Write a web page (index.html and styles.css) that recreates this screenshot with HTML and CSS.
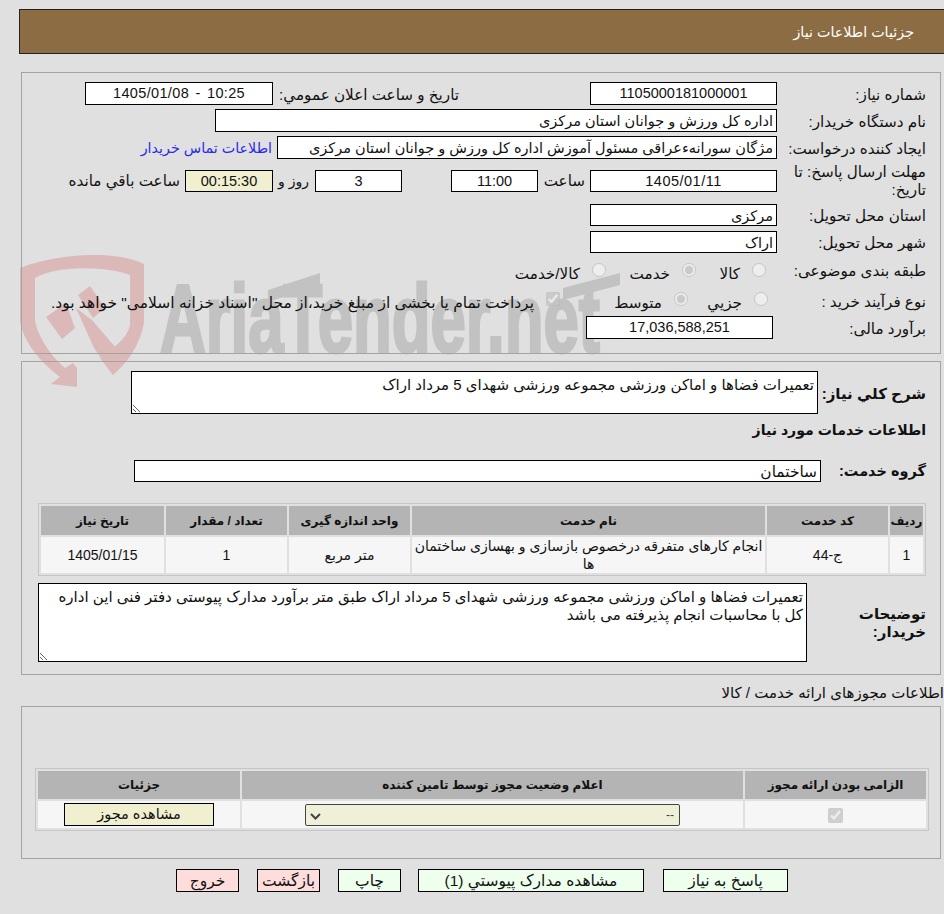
FILE: index.html
```html
<!DOCTYPE html>
<html lang="fa" dir="rtl">
<head>
<meta charset="utf-8">
<title>جزئیات اطلاعات نیاز</title>
<link rel="stylesheet" href="styles.css">
</head>
<body>
<svg class="watermark" width="620" height="160" viewBox="0 0 620 160" aria-hidden="true">
  <path class="wm-red" d="M10 28 C40 16 100 8 134 24 L134 83 C130 105 118 122 103 135 L90 118 C108 105 120 95 120 82 L120 35 C100 27 50 24 25 38 L25 80 C27 95 40 115 55 128 L63 123 L67 128 L67 147 L41 144 L50 137 C30 122 12 100 10 80 Z"/>
  <path class="wm-red" d="M36 77 L56 63 L65 88 L52 99 Z M68 55 L80 46 L95 68 L83 78 Z M66 68 L82 80 L112 115 L103 135 L84 108 Z"/>
  <text class="wm-text" x="150" y="112" textLength="440" lengthAdjust="spacingAndGlyphs">AriaTender.net</text>
  <path class="wm-gray" d="M258 50 L310 33 L310 45 L258 62 Z M553 48 L610 33 L610 45 L553 60 Z"/>
</svg>

<header class="page-head">جزئیات اطلاعات نیاز</header>

<section class="panel p1">
  <div class="row mb4">
    <span class="lbl">شماره نیاز:</span>
    <span class="box w187 c">1105000181000001</span>
    <span class="lbl-free mr-pub">تاریخ و ساعت اعلان عمومي:</span>
    <span class="box w188 c ltr pubdate">1405/01/08 - 10:25</span>
  </div>
  <div class="row mb4">
    <span class="lbl">نام دستگاه خریدار:</span>
    <span class="box w562">اداره کل ورزش و جوانان استان مرکزی</span>
  </div>
  <div class="row mb4">
    <span class="lbl">ایجاد کننده درخواست:</span>
    <span class="box w500">مژگان سورانهءعراقی مسئول آموزش اداره کل ورزش و جوانان استان مرکزی</span>
    <a class="link" href="#">اطلاعات تماس خریدار</a>
  </div>
  <div class="row deadline">
    <span class="lbl two">مهلت ارسال پاسخ: تا تاریخ:</span>
    <span class="box w187 h22 c ltr date">1405/01/11</span>
    <span class="lbl-free sa">ساعت</span>
    <span class="box w87 h22 c">11:00</span>
    <span class="box w87 h22 c day">3</span>
    <span class="lbl-free rz">روز و</span>
    <span class="box w88 h22 c timer">00:15:30</span>
    <span class="lbl-free rem">ساعت باقي مانده</span>
  </div>
  <div class="row mb5">
    <span class="lbl">استان محل تحویل:</span>
    <span class="box w187 h22">مرکزی</span>
  </div>
  <div class="row mb4">
    <span class="lbl">شهر محل تحویل:</span>
    <span class="box w187 h22">اراک</span>
  </div>
  <div class="row choices r-cat">
    <span class="lbl">طبقه بندی موضوعی:</span>
    <input class="rd m11" type="radio" disabled><span class="opt w44">کالا</span>
    <input class="rd" type="radio" disabled checked><span class="opt w64">خدمت</span>
    <input class="rd" type="radio" disabled><span class="opt">کالا/خدمت</span>
  </div>
  <div class="row choices r-proc">
    <span class="lbl">نوع فرآیند خرید :</span>
    <input class="rd m9" type="radio" disabled><span class="opt w54">جزیي</span>
    <input class="rd" type="radio" disabled checked><span class="opt w102">متوسط</span>
    <input class="rd" type="checkbox" disabled checked><span class="opt long">پرداخت تمام یا بخشی از مبلغ خرید،از محل "اسناد خزانه اسلامی" خواهد بود.</span>
  </div>
  <div class="row">
    <span class="lbl">برآورد مالی:</span>
    <span class="box w187 c budget">17,036,588,251</span>
  </div>
</section>

<section class="panel p2">
  <div class="row desc-row">
    <span class="lbl-b lb-desc">شرح كلي نیاز:</span>
    <textarea class="ta ta1" readonly>تعمیرات فضاها و اماکن ورزشی مجموعه ورزشی شهدای 5 مرداد اراک</textarea>
  </div>
  <h2 class="sub">اطلاعات خدمات مورد نیاز</h2>
  <div class="row group-row">
    <span class="lbl-b lb-group">گروه خدمت:</span>
    <span class="box w687 h22 sm">ساختمان</span>
  </div>
  <table class="grid g1">
    <colgroup><col class="c1"><col class="c2"><col class="c3"><col class="c4"><col class="c5"><col class="c6"></colgroup>
    <thead>
      <tr><th>ردیف</th><th>کد خدمت</th><th>نام خدمت</th><th>واحد اندازه گیری</th><th>تعداد / مقدار</th><th>تاریخ نیاز</th></tr>
    </thead>
    <tbody>
      <tr><td>1</td><td>ج-44</td><td class="svc">انجام کارهای متفرقه درخصوص بازسازی و بهسازی ساختمان ها</td><td>متر مربع</td><td>1</td><td>1405/01/15</td></tr>
    </tbody>
  </table>
  <div class="row buyer-row">
    <span class="lbl-b lb-buyer">توضیحات خریدار:</span>
    <textarea class="ta ta2" readonly>تعمیرات فضاها و اماکن ورزشی مجموعه ورزشی شهدای 5 مرداد اراک طبق متر برآورد مدارک پیوستی دفتر فنی این اداره کل با محاسبات انجام پذیرفته می باشد</textarea>
  </div>
</section>

<div class="lic-title">اطلاعات مجوزهای ارائه خدمت / کالا</div>

<section class="panel p3">
  <table class="grid g2">
    <colgroup><col class="d1"><col class="d2"><col class="d3"></colgroup>
    <thead>
      <tr><th>الزامی بودن ارائه مجوز</th><th>اعلام وضعیت مجوز توسط تامین کننده</th><th>جزئیات</th></tr>
    </thead>
    <tbody>
      <tr>
        <td><input class="ck2" type="checkbox" disabled checked></td>
        <td><select class="sel" disabled><option>--</option></select></td>
        <td><button class="btn view" type="button">مشاهده مجوز</button></td>
      </tr>
    </tbody>
  </table>
</section>

<footer class="actions">
  <button class="btn green b1" type="button">پاسخ به نیاز</button>
  <button class="btn green b2" type="button">مشاهده مدارک پیوستي (1)</button>
  <button class="btn green b3" type="button">چاپ</button>
  <button class="btn pink b3" type="button">بازگشت</button>
  <button class="btn pink b3" type="button">خروج</button>
</footer>
</body>
</html>
```
FILE: styles.css
```css
* { box-sizing: border-box; }
html, body { margin: 0; padding: 0; }
body {
  position: relative;
  width: 944px;
  height: 914px;
  overflow: hidden;
  background: #e0e0e0;
  color: #111;
  font: 15.2px/18px "Liberation Sans", "DejaVu Sans", sans-serif;
  padding-top: 9px;
}
.watermark { position: absolute; left: 10px; top: 240px; z-index: 0; }
.wm-red { fill: #dcb9b9; }
.wm-gray { fill: #c2c2c2; }
.wm-text {
  direction: ltr;
  unicode-bidi: bidi-override;
  text-anchor: start;
  font: 700 96px "Liberation Sans", sans-serif;
  fill: #c2c2c2;
  stroke: #c2c2c2;
  stroke-width: 3px;
}

.page-head {
  position: relative;
  height: 45px;
  margin-left: 19px;
  padding: 0 30px;
  background: #8c6c42;
  border: 1px solid #222;
  border-right: 0;
  color: #fff;
  font-size: 14.3px;
  line-height: 44px;
}

.panel {
  position: relative;
  z-index: 1;
  width: 920px;
  margin: 0 3px 0 0;
  border: 1px solid #a3a3a3;
}
.p1 { margin-top: 18px; height: 282px; padding: 9px 14px 0; }
.p2 { margin-top: 7px; height: 314px; padding: 9px 14px 0; }
.p3 { height: 153px; padding: 61px 11px 0; }

.row { display: flex; align-items: center; }
.mb4 { margin-bottom: 4px; }
.mb5 { margin-bottom: 5px; }
.lbl { flex: 0 0 149px; padding-top: 2px; }
.lbl.two { padding-top: 0; padding-left: 10px; }
.box {
  display: block;
  height: 23px;
  flex: none;
  padding: 0 3px;
  background: #fff;
  border: 1px solid #000;
  font-size: 14.5px;
  line-height: 21px;
  white-space: nowrap;
  overflow: hidden;
}
.box:not(.c) { padding-top: 1px; }
.c { text-align: center; }
.ltr { direction: ltr; }
.pubdate { word-spacing: 2px; letter-spacing: .35px; }
.date { letter-spacing: .5px; }
.h22 { height: 22px; line-height: 20px; }
.w187 { width: 187px; }
.w188 { width: 188px; }
.w562 { width: 562px; }
.w500 { width: 500px; }
.w87 { width: 87px; }
.w88 { width: 88px; }
.w687 { width: 687px; }
.sm { font-size: 15.4px; }
.lbl-free { flex: none; white-space: nowrap; }
.mr-pub { margin: 0 131px 0 5px; width: 181px; padding-top: 2px; }
.link { margin-right: 5px; color: #2a2aee; font-size: 14.3px; text-decoration: none; white-space: nowrap; }
.deadline { height: 36px; margin: 0 0 5px; }
.sa { width: 47px; padding-right: 5px; margin-left: 5px; }
.day { margin-right: 49px; }
.rz { width: 42px; padding-right: 6px; font-size: 14px; }
.timer { background: #f0f0d0; }
.rem { margin-right: 5px; }

.choices { align-items: flex-start; }
.r-cat { height: 28px; }
.r-proc { height: 23px; margin: 4px 0; }
.choices .lbl { margin-top: 5px; padding-top: 0; }
.r-proc .lbl { margin-top: 4px; }
.rd { flex: none; width: 14px; height: 14px; margin: 6px 0 0; }
.r-proc .rd { margin-top: 3px; }
.m11 { margin-right: 11px; }
.r-proc .m9 { margin-right: 9px; }
.opt { margin: 8px 12px 0 0; white-space: nowrap; }
.r-proc .opt { margin-top: 5px; }
.long { font-size: 15.5px; }
.w44 { width: 44px; }
.w64 { width: 64px; }
.w54 { width: 54px; }
.w102 { width: 102px; }
.budget { margin-right: 4px; }

.lbl-b { font-size: 15px; font-weight: 700; flex: none; }
.lb-desc { width: 108px; padding-top: 2px; }
.ta {
  display: block;
  flex: none;
  background: #fff;
  border: 1px solid #000;
  color: #111;
  font: 15px/18px "Liberation Sans", "DejaVu Sans", sans-serif;
  padding: 4px 3px 0;
  resize: both;
  outline: 0;
}
.ta1 { width: 687px; height: 43px; }
.ta2 { width: 769px; height: 79px; padding-top: 4px; }
.sub { margin: 6px 0 0; font-size: 14.1px; line-height: 20px; font-weight: 700; }
.group-row { margin-top: 20px; height: 22px; }
.lb-group { width: 105px; font-size: 14.5px; }
.g1 { margin: 21px 0 0; width: 888px; }
.grid {
  border-collapse: separate;
  border-spacing: 2px;
  border: 1px solid #c6c6c6;
  table-layout: fixed;
}
.grid th { background: #b4b4b4; font-size: 12px; font-weight: 700; padding: 0; height: 29px; text-align: center; }
.grid td { background: #f6f6f6; padding: 0; text-align: center; font-size: 14px; line-height: 18px; }
.g1 td { height: 36px; }
.c1 { width: 33px; } .c2 { width: 121px; } .c3 { width: 353px; } .c4 { width: 121px; } .c5 { width: 121px; } .c6 { width: 123px; }
.svc { padding: 0 4px; }
.buyer-row { margin-top: 7px; }
.lb-buyer { width: 119px; line-height: 18px; padding-left: 30px; }

.lic-title { margin-top: 9px; height: 22px; font-size: 15px; white-space: nowrap; line-height: 18px; }
.g2 { width: 894px; }
.g2 th { height: 28px; }
.g2 td { height: 27px; }
.d1 { width: 181px; } .d2 { width: 501px; } .d3 { width: 202px; }
.ck2 { width: 15px; height: 15px; margin: 0; vertical-align: middle; }
.sel {
  display: block;
  width: 375px;
  height: 22px;
  margin: 0 auto 0 63px;
  appearance: none;
  padding: 0 5px 0 20px;
  background: #f0f0d8 url("data:image/svg+xml,%3Csvg xmlns='http://www.w3.org/2000/svg' width='11' height='7'%3E%3Cpath d='M1 1l4.5 4.5L10 1' fill='none' stroke='%23444' stroke-width='2'/%3E%3C/svg%3E") no-repeat 4px 8px;
  border: 1px solid #444;
  border-radius: 2px;
  color: #444;
  opacity: 1;
  font: 12px "Liberation Sans", sans-serif;
}
.btn {
  display: block;
  border: 1px solid #000;
  padding: 0;
  font: 15.5px/21px "Liberation Sans", "DejaVu Sans", sans-serif;
  color: #111;
  height: 23px;
  border-radius: 0;
}
.view { width: 150px; margin: 0 auto; background: #f0f0d0; font-size: 14.5px; }
.actions { position: relative; z-index: 1; display: flex; gap: 18px; padding: 10px 156px 0 0; }
.green { background: #eeffee; }
.pink { background: #ffdddd; }
.b1 { width: 125px; margin-left: 1px; }
.b2 { width: 226px; margin-left: -1px; }
.b3 { width: 63px; }
```
